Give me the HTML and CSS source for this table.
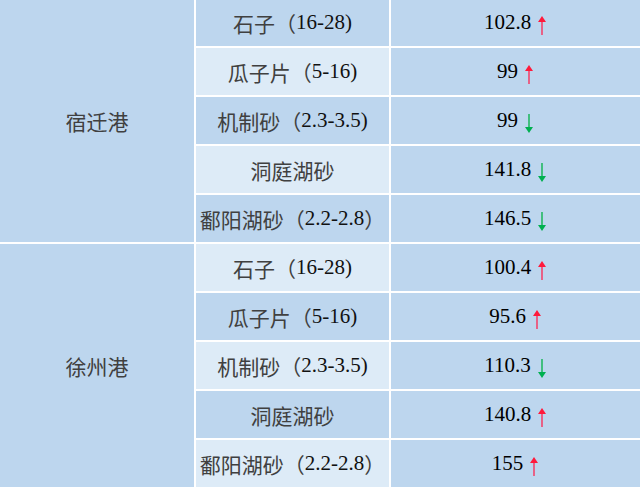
FILE: index.html
```html
<!DOCTYPE html>
<html lang="zh">
<head>
<meta charset="utf-8">
<title>港口砂石价格</title>
<link rel="stylesheet" href="styles.css">
</head>
<body>
<div class="grid">
  <div class="port">宿迁港</div>
  <div class="item dark"><span class="zh">石子（</span>16-28)</div>
  <div class="val">102.8<svg class="arrow up" viewBox="0 0 10 19" width="10" height="19"><path d="M5 4V19" /><polygon points="5,0 1,6 9,6"/></svg></div>
  <div class="item light"><span class="zh">瓜子片（</span>5-16)</div>
  <div class="val">99<svg class="arrow up" viewBox="0 0 10 19" width="10" height="19"><path d="M5 4V19" /><polygon points="5,0 1,6 9,6"/></svg></div>
  <div class="item dark"><span class="zh">机制砂（</span>2.3-3.5)</div>
  <div class="val">99<svg class="arrow down" viewBox="0 0 10 19" width="10" height="19"><path d="M5 0V15" /><polygon points="5,19 1,13 9,13"/></svg></div>
  <div class="item light"><span class="zh">洞庭湖砂</span></div>
  <div class="val">141.8<svg class="arrow down" viewBox="0 0 10 19" width="10" height="19"><path d="M5 0V15" /><polygon points="5,19 1,13 9,13"/></svg></div>
  <div class="item dark"><span class="zh">鄱阳湖砂（</span>2.2-2.8<span class="zh">）</span></div>
  <div class="val">146.5<svg class="arrow down" viewBox="0 0 10 19" width="10" height="19"><path d="M5 0V15" /><polygon points="5,19 1,13 9,13"/></svg></div>

  <div class="port">徐州港</div>
  <div class="item light"><span class="zh">石子（</span>16-28)</div>
  <div class="val">100.4<svg class="arrow up" viewBox="0 0 10 19" width="10" height="19"><path d="M5 4V19" /><polygon points="5,0 1,6 9,6"/></svg></div>
  <div class="item dark"><span class="zh">瓜子片（</span>5-16)</div>
  <div class="val">95.6<svg class="arrow up" viewBox="0 0 10 19" width="10" height="19"><path d="M5 4V19" /><polygon points="5,0 1,6 9,6"/></svg></div>
  <div class="item light"><span class="zh">机制砂（</span>2.3-3.5)</div>
  <div class="val">110.3<svg class="arrow down" viewBox="0 0 10 19" width="10" height="19"><path d="M5 0V15" /><polygon points="5,19 1,13 9,13"/></svg></div>
  <div class="item dark"><span class="zh">洞庭湖砂</span></div>
  <div class="val">140.8<svg class="arrow up" viewBox="0 0 10 19" width="10" height="19"><path d="M5 4V19" /><polygon points="5,0 1,6 9,6"/></svg></div>
  <div class="item light"><span class="zh">鄱阳湖砂（</span>2.2-2.8<span class="zh">）</span></div>
  <div class="val">155<svg class="arrow up" viewBox="0 0 10 19" width="10" height="19"><path d="M5 4V19" /><polygon points="5,0 1,6 9,6"/></svg></div>
</div>
</body>
</html>
```

FILE: styles.css
```css
html, body {
  margin: 0;
  padding: 0;
  background: #ffffff;
  overflow: hidden;
}

.grid {
  display: grid;
  grid-template-columns: 194px 193px 1fr;
  grid-auto-rows: 47px;
  gap: 2px;
  width: 640px;
  margin-top: -1px;
  background: #ffffff;
  font-family: "Liberation Serif", "Noto Sans CJK SC", serif;
  font-size: 21px;
  color: #111111;
}

.grid > div {
  display: flex;
  align-items: center;
  justify-content: center;
  white-space: nowrap;
}

.port {
  grid-column: 1;
  grid-row: span 5;
  background: #bdd6ee;
  color: #404040;
}

.item.dark {
  background: #bdd6ee;
}

.item.light {
  background: #ddebf7;
}

.zh {
  color: #404040;
}

.val {
  background: #bdd6ee;
  color: #000000;
}

.arrow {
  margin-left: 6px;
  position: relative;
  top: 3px;
}

.arrow path {
  stroke-width: 1.6;
  fill: none;
}

.arrow.up path {
  stroke: #f2446c;
}

.arrow.up polygon {
  fill: #ff1a3c;
}

.arrow.down path {
  stroke: #22b862;
}

.arrow.down polygon {
  fill: #00b050;
}
```
